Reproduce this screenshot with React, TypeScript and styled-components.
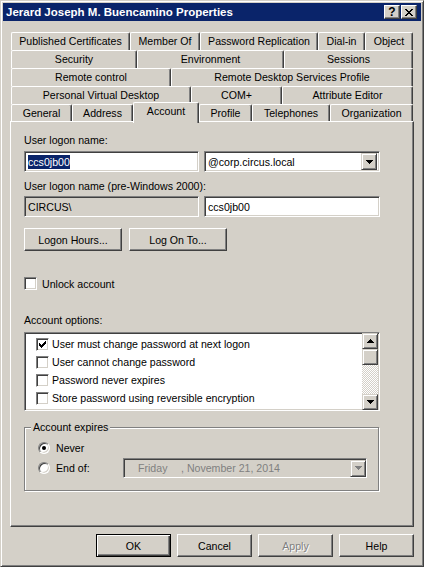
import React from "react";
import styled, { createGlobalStyle, css } from "styled-components";

const FACE = "#d4d0c8";
const SHADOW = "#808080";
const DARK = "#404040";
const NAVY = "#0a246a";

const GlobalStyle = createGlobalStyle`
  html, body {
    margin: 0;
    padding: 0;
    background: ${FACE};
  }
  body {
    font-family: "Liberation Sans", Arial, sans-serif;
    font-size: 10.6px;
    color: #000;
  }
`;

const Window = styled.div`
  box-sizing: border-box;
  width: 424px;
  height: 567px;
  background: ${FACE};
  border: 1px solid;
  border-color: ${FACE} ${DARK} ${DARK} ${FACE};
  box-shadow: inset 1px 1px #fff, inset -1px -1px ${SHADOW};
  padding: 2px;
  display: flex;
  flex-direction: column;
`;

const TitleBar = styled.div`
  height: 18px;
  background: ${NAVY};
  display: flex;
  align-items: center;
  padding: 0 4px 0 3px;
  color: #fff;
  font-weight: bold;
  font-size: 11.5px;
  white-space: nowrap;
  span {
    flex: 1;
  }
`;

const CaptionButton = styled.div<{ $gap?: number }>`
  box-sizing: border-box;
  width: 16px;
  height: 14px;
  margin-left: ${(p) => p.$gap ?? 0}px;
  background: ${FACE};
  border: 1px solid;
  border-color: #fff ${DARK} ${DARK} #fff;
  box-shadow: inset -1px -1px ${SHADOW};
  color: #000;
  display: flex;
  align-items: center;
  justify-content: center;
  font-size: 12px;
  font-weight: bold;
  line-height: 12px;
`;

const Body = styled.div`
  padding: 11px 7px 0;
  display: flex;
  flex-direction: column;
`;

const TabStrip = styled.div`
  display: flex;
  flex-direction: column;
  margin: 0 1px;
`;

const TabRow = styled.div`
  display: flex;
  height: 18px;
`;

const Tab = styled.div<{ $w: number; $active?: boolean }>`
  box-sizing: border-box;
  flex: none;
  width: ${(p) => p.$w}px;
  height: 18px;
  background: ${FACE};
  border-top: 1px solid #fff;
  border-left: 1px solid #fff;
  border-right: 1px solid ${DARK};
  border-top-left-radius: 2px;
  border-top-right-radius: 2px;
  box-shadow: inset -1px 0 ${SHADOW};
  text-align: center;
  line-height: 16px;
  white-space: nowrap;
  ${(p) =>
    p.$active &&
    css`
      position: relative;
      z-index: 2;
      height: 21px;
      margin-top: -2px;
    `}
`;

const Panel = styled.div`
  box-sizing: border-box;
  height: 406px;
  margin-top: -1px;
  border: 1px solid;
  border-color: #fff ${DARK} ${DARK} #fff;
  box-shadow: inset -1px -1px ${SHADOW};
  padding: 12px 0 0 13px;
  display: flex;
  flex-direction: column;
  align-items: flex-start;
`;

const Label = styled.div<{ $mt: number }>`
  margin-top: ${(p) => p.$mt}px;
  line-height: 13px;
  white-space: nowrap;
`;

const Row = styled.div<{ $mt: number; $gap: number }>`
  display: flex;
  align-items: center;
  margin-top: ${(p) => p.$mt}px;
  gap: ${(p) => p.$gap}px;
`;

const sunken = css`
  border: 1px solid;
  border-color: ${SHADOW} #fff #fff ${SHADOW};
  box-shadow: inset 1px 1px ${DARK}, inset -1px -1px ${FACE};
`;

const Field = styled.div<{ $w: number; $disabled?: boolean }>`
  box-sizing: border-box;
  width: ${(p) => p.$w}px;
  height: 21px;
  ${sunken};
  background: ${(p) => (p.$disabled ? FACE : "#fff")};
  padding: 0 2px 0 3px;
  display: flex;
  align-items: center;
  white-space: nowrap;
  span.text {
    flex: 1;
  }
`;

const Selected = styled.span`
  background: ${NAVY};
  color: #fff;
  line-height: 14px;
`;

const DropButton = styled.div<{ $disabled?: boolean }>`
  box-sizing: border-box;
  width: 16px;
  height: 17px;
  flex: none;
  background: ${FACE};
  border: 1px solid;
  border-color: ${FACE} ${DARK} ${DARK} ${FACE};
  box-shadow: inset 1px 1px #fff, inset -1px -1px ${SHADOW};
  display: flex;
  align-items: center;
  justify-content: center;
  color: ${(p) => (p.$disabled ? SHADOW : "#000")};
`;

const Button = styled.button<{ $w: number; $default?: boolean; $disabled?: boolean }>`
  box-sizing: border-box;
  width: ${(p) => p.$w}px;
  height: 23px;
  padding: 0;
  font: inherit;
  color: #000;
  background: ${FACE};
  border: 1px solid;
  border-color: #fff ${DARK} ${DARK} #fff;
  box-shadow: inset -1px -1px ${SHADOW};
  ${(p) =>
    p.$default &&
    css`
      border-color: #000;
      box-shadow: inset 1px 1px #fff, inset -1px -1px ${DARK}, inset -2px -2px ${SHADOW};
    `}
  ${(p) =>
    p.$disabled &&
    css`
      color: ${SHADOW};
      text-shadow: 1px 1px #fff;
    `}
`;

const CheckRow = styled.div<{ $mt?: number; $h?: number; $gap: number }>`
  display: flex;
  align-items: center;
  margin-top: ${(p) => p.$mt ?? 0}px;
  height: ${(p) => p.$h ?? 13}px;
  gap: ${(p) => p.$gap}px;
  white-space: nowrap;
`;

const Box = styled.span`
  box-sizing: border-box;
  width: 13px;
  height: 13px;
  flex: none;
  ${sunken};
  background: #fff;
  display: flex;
  align-items: center;
  justify-content: center;
`;

const ListBox = styled.div`
  box-sizing: border-box;
  margin-top: 5px;
  width: 356px;
  height: 79px;
  ${sunken};
  background: #fff;
  display: flex;
`;

const ListItems = styled.div`
  flex: 1;
  padding: 2px 0 0 11px;
  display: flex;
  flex-direction: column;
`;

const ScrollBar = styled.div`
  width: 16px;
  display: flex;
  flex-direction: column;
  margin-right: 1px;
`;

const ScrollButton = styled.div`
  box-sizing: border-box;
  height: 16px;
  background: ${FACE};
  border: 1px solid;
  border-color: ${FACE} ${DARK} ${DARK} ${FACE};
  box-shadow: inset 1px 1px #fff, inset -1px -1px ${SHADOW};
  display: flex;
  align-items: center;
  justify-content: center;
`;

const Track = styled.div`
  flex: 1;
  background: repeating-conic-gradient(#fff 0 25%, ${FACE} 0 50%) 0 0 / 2px 2px;
`;

const Group = styled.div`
  position: relative;
  box-sizing: border-box;
  margin-top: 16px;
  width: 355px;
  height: 64px;
  border: 1px solid ${SHADOW};
  box-shadow: inset 1px 1px #fff, 1px 1px #fff;
  padding: 13px 0 0 13px;
`;

const Legend = styled.span`
  position: absolute;
  top: -7px;
  left: 6px;
  padding: 0 2px;
  background: ${FACE};
  line-height: 13px;
`;

const Radio = styled.span<{ $on?: boolean }>`
  box-sizing: border-box;
  width: 12px;
  height: 12px;
  flex: none;
  border-radius: 50%;
  border: 1px solid;
  border-color: ${SHADOW} #fff #fff ${SHADOW};
  box-shadow: inset 1px 1px ${DARK}, inset -1px -1px ${FACE};
  background: #fff;
  display: flex;
  align-items: center;
  justify-content: center;
  &::after {
    content: "";
    width: 4px;
    height: 4px;
    border-radius: 50%;
    background: ${(p) => (p.$on ? "#000" : "transparent")};
  }
`;

const RadioLabel = styled.div`
  width: 85px;
  display: flex;
  align-items: center;
  gap: 6px;
`;

const DatePicker = styled.div`
  box-sizing: border-box;
  width: 244px;
  height: 20px;
  ${sunken};
  background: ${FACE};
  color: ${SHADOW};
  display: flex;
  align-items: center;
  padding: 0 0 0 14px;
  white-space: nowrap;
  .day {
    width: 43px;
  }
  .date {
    flex: 1;
  }
`;

const Footer = styled.div`
  display: flex;
  justify-content: flex-end;
  gap: 6px;
  margin-top: 7px;
`;

const px = (rows: [number, number][]) =>
  rows.map(([x, w], i) => <rect key={i} x={x} y={0} width={w} height={1} />);

function Arrow({ up }: { up?: boolean }) {
  const rows: [number, number, number][] = [
    [0, 7, 0],
    [1, 5, 1],
    [2, 3, 2],
    [3, 1, 3],
  ];
  return (
    <svg width="7" height="4" viewBox="0 0 7 4" shapeRendering="crispEdges" fill="currentColor">
      {rows.map(([x, w, y], i) => (
        <rect key={i} x={x} y={up ? 3 - y : y} width={w} height={1} />
      ))}
    </svg>
  );
}

function CheckMark() {
  const rows: [number, number, number][] = [
    [6, 1, 0],
    [5, 2, 1],
    [0, 1, 2],
    [4, 3, 2],
    [0, 2, 3],
    [3, 3, 3],
    [0, 5, 4],
    [1, 3, 5],
    [2, 1, 6],
  ];
  return (
    <svg width="7" height="7" viewBox="0 0 7 7" shapeRendering="crispEdges" fill="#000">
      {rows.map(([x, w, y], i) => (
        <rect key={i} x={x} y={y} width={w} height={1} />
      ))}
    </svg>
  );
}

function CloseGlyph() {
  const rows: [number, number, number][] = [
    [0, 2, 0],
    [6, 2, 0],
    [1, 2, 1],
    [5, 2, 1],
    [2, 4, 2],
    [3, 2, 3],
    [2, 4, 4],
    [1, 2, 5],
    [5, 2, 5],
    [0, 2, 6],
    [6, 2, 6],
  ];
  return (
    <svg width="8" height="7" viewBox="0 0 8 7" shapeRendering="crispEdges" fill="#000">
      {rows.map(([x, w, y], i) => (
        <rect key={i} x={x} y={y} width={w} height={1} />
      ))}
    </svg>
  );
}

function Checkbox({ checked }: { checked?: boolean }) {
  return <Box>{checked && <CheckMark />}</Box>;
}

const tabRows: { label: string; w: number; active?: boolean }[][] = [
  [
    { label: "Published Certificates", w: 119 },
    { label: "Member Of", w: 70 },
    { label: "Password Replication", w: 118 },
    { label: "Dial-in", w: 47 },
    { label: "Object", w: 48 },
  ],
  [
    { label: "Security", w: 126 },
    { label: "Environment", w: 147 },
    { label: "Sessions", w: 129 },
  ],
  [
    { label: "Remote control", w: 160 },
    { label: "Remote Desktop Services Profile", w: 242 },
  ],
  [
    { label: "Personal Virtual Desktop", w: 180 },
    { label: "COM+", w: 91 },
    { label: "Attribute Editor", w: 131 },
  ],
  [
    { label: "General", w: 61 },
    { label: "Address", w: 61 },
    { label: "Account", w: 66, active: true },
    { label: "Profile", w: 53 },
    { label: "Telephones", w: 78 },
    { label: "Organization", w: 83 },
  ],
];

const options = [
  { label: "User must change password at next logon", checked: true },
  { label: "User cannot change password" },
  { label: "Password never expires" },
  { label: "Store password using reversible encryption" },
];

export default function App() {
  return (
    <>
      <GlobalStyle />
      <Window>
        <TitleBar>
          <span>Jerard Joseph M. Buencamino Properties</span>
          <CaptionButton>?</CaptionButton>
          <CaptionButton $gap={1}>
            <CloseGlyph />
          </CaptionButton>
        </TitleBar>
        <Body>
          <TabStrip>
            {tabRows.map((row, i) => (
              <TabRow key={i}>
                {row.map((t) => (
                  <Tab key={t.label} $w={t.w} $active={t.active}>
                    {t.label}
                  </Tab>
                ))}
              </TabRow>
            ))}
          </TabStrip>
          <Panel>
            <Label $mt={0}>User logon name:</Label>
            <Row $mt={4} $gap={5}>
              <Field $w={175}>
                <Selected>ccs0jb00</Selected>
              </Field>
              <Field $w={176}>
                <span className="text">@corp.circus.local</span>
                <DropButton>
                  <Arrow />
                </DropButton>
              </Field>
            </Row>
            <Label $mt={8}>User logon name (pre-Windows 2000):</Label>
            <Row $mt={3} $gap={5}>
              <Field $w={175} $disabled>
                CIRCUS\
              </Field>
              <Field $w={176}>ccs0jb00</Field>
            </Row>
            <Row $mt={11} $gap={7}>
              <Button $w={98}>Logon Hours...</Button>
              <Button $w={98}>Log On To...</Button>
            </Row>
            <CheckRow $mt={26} $gap={5}>
              <Checkbox />
              Unlock account
            </CheckRow>
            <Label $mt={24}>Account options:</Label>
            <ListBox>
              <ListItems>
                {options.map((o) => (
                  <CheckRow key={o.label} $h={18} $gap={3}>
                    <Checkbox checked={o.checked} />
                    {o.label}
                  </CheckRow>
                ))}
              </ListItems>
              <ScrollBar>
                <ScrollButton>
                  <Arrow up />
                </ScrollButton>
                <ScrollButton />
                <Track />
                <ScrollButton>
                  <Arrow />
                </ScrollButton>
              </ScrollBar>
            </ListBox>
            <Group>
              <Legend>Account expires</Legend>
              <CheckRow $gap={6}>
                <Radio $on />
                Never
              </CheckRow>
              <CheckRow $mt={4} $h={20} $gap={0}>
                <RadioLabel>
                  <Radio />
                  End of:
                </RadioLabel>
                <DatePicker>
                  <span className="day">Friday</span>
                  <span className="date">, November 21, 2014</span>
                  <DropButton $disabled>
                    <Arrow />
                  </DropButton>
                </DatePicker>
              </CheckRow>
            </Group>
          </Panel>
          <Footer>
            <Button $w={75} $default>
              OK
            </Button>
            <Button $w={75}>Cancel</Button>
            <Button $w={75} $disabled>
              Apply
            </Button>
            <Button $w={75}>Help</Button>
          </Footer>
        </Body>
      </Window>
    </>
  );
}
